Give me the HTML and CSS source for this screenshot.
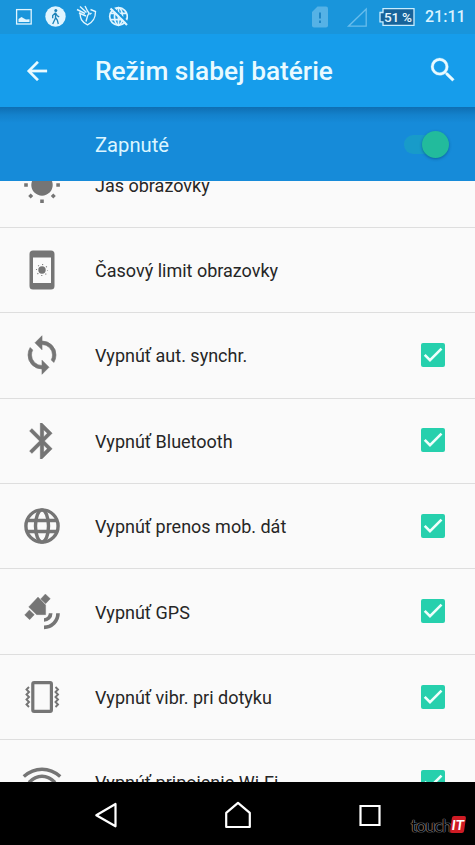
FILE: index.html
```html
<!DOCTYPE html>
<html lang="sk">
<head>
<meta charset="utf-8">
<title>Režim slabej batérie</title>
<link rel="stylesheet" href="styles.css">
</head>
<body>
<div class="phone">
  <div class="status">
    <svg class="notifications" width="120" height="34" viewBox="0 0 120 34">
      <g fill="none" stroke="#e0f5ff">
        <rect x="8.600" y="9.600" width="14.600" height="14.400" stroke-width="1.300"/>
        <path d="M10.500 22v-3l3-2 2.500 1.500 2 1 3.500-.3V22z" fill="#e0f5ff" stroke="none"/>
        <circle cx="47.500" cy="16.500" r="10.200" fill="#e0f5ff" stroke="none"/>
        <circle cx="47.800" cy="10.600" r="1.500" fill="#1c83b8" stroke="none"/>
        <path d="M47.500 12.500v5.500l-2.800 6M47.500 17.500l1.800 2.500 1 4M47.300 13l-2.600 2.500v2.700M48 13.500l1.200 2.300 2 1" stroke="#1c83b8" stroke-width="1.300"/>
        <path d="M72 12.500c.2 6 1.500 9.500 7.500 12.300 6.500-3.300 8-7.300 8-13.300l-5-2" stroke-width="1.400"/>
        <path d="M69 9.500l8 4M72 6.500l6.500 6M77 6l2.500 5M71 13l7 3M79.500 11l1.500 2-1.500 3-1.500 5.500M81.500 14.500l2-1.500" stroke-width="1.400"/>
        <circle cx="110.500" cy="16.500" r="8.800" stroke-width="1.700"/>
        <ellipse cx="110.500" cy="16.500" rx="4" ry="8.800" stroke-width="1.700"/>
        <path d="M102 13.300h17M102 19.700h17M110.500 8v17" stroke-width="1.700"/>
        <path d="M104.200 7.200l16 16" stroke="#1995db" stroke-width="2"/>
        <path d="M102.500 8.500L119 25" stroke-width="2.200"/>
      </g>
    </svg>
    <svg class="signals" width="60" height="34" viewBox="308 0 60 34">
      <path d="M317.500 6.500h8.500a2 2 0 0 1 2 2v17a2 2 0 0 1-2 2h-12a2 2 0 0 1-2-2V12z" fill="#55b2e6"/>
      <path d="M320 12.500v6M320 20.500v2.500" stroke="#1f86c6" stroke-width="2"/>
      <path d="M366.200 9v17.200H348.500z" fill="none" stroke="#69bdec" stroke-width="1.300"/>
    </svg>
    <div class="battery"><svg width="36" height="18" viewBox="0 0 36 18"><path d="M4 .7h31v16.600H4v-3.500H1V4.500h3z" fill="#17639a" stroke="#c8edff" stroke-width="1.300"/></svg><span>51 %</span></div>
    <span class="clock">21:11</span>
  </div>
  <header class="bar">
    <svg class="back" width="30" height="30" viewBox="0 0 24 24"><path fill="#e9faff" stroke="#e9faff" stroke-width=".2" d="M20 11H7.830l5.590-5.590L12 4l-8 8 8 8 1.410-1.410L7.830 13H20z"/></svg>
    <h1>Režim slabej batérie</h1>
    <svg class="search" width="32" height="32" viewBox="0 0 24 24"><path fill="#e9faff" stroke="#e9faff" stroke-width=".2" d="M15.500 14h-.79l-.28-.27A6.470 6.470 0 0 0 16 9.500 6.500 6.500 0 1 0 9.500 16c1.610 0 3.090-.59 4.230-1.570l.27.28v.79l5 4.990L20.490 19zm-6 0a4.500 4.500 0 1 1 0-9 4.500 4.500 0 0 1 0 9z"/></svg>
  </header>
  <div class="master">
    <div class="cast"></div>
    <span>Zapnuté</span>
    <div class="switch"><i></i></div>
  </div>
  <main class="viewport">
    <div class="list">
      <div class="row">
        <svg class="icon" viewBox="0 0 36 36"><g fill="#757575"><circle cx="18" cy="18" r="10.700"/><path d="M16.200 0h3.600v3.600h-3.600zM16.200 32.400h3.600v3.600h-3.600zM.2 16.200h3.600v3.600H.2zM32.300 16.200h3.600v3.600h-3.600z"/><path d="M6.700 26.400l2.500 2.500-2.500 2.500-2.500-2.500zM29.300 26.400l2.500 2.500-2.500 2.500-2.500-2.500zM6.700 4.600l2.500 2.500-2.500 2.500-2.500-2.500zM29.300 4.600l2.500 2.500-2.500 2.500-2.500-2.500z"/></g></svg>
        <span>Jas obrazovky</span>
      </div>
      <div class="row">
        <svg class="icon tall" viewBox="0 0 36 40"><path fill="#757575" fill-rule="evenodd" d="M9 .5h18a3.500 3.500 0 0 1 3.500 3.500v32a3.500 3.500 0 0 1-3.500 3.500H9A3.500 3.500 0 0 1 5.500 36V4A3.500 3.500 0 0 1 9 .5zM9 7.500V33h18V7.500z"/><circle cx="18" cy="20" r="3.700" fill="#757575"/><circle cx="18" cy="20" r="5.500" fill="none" stroke="#757575" stroke-width="1.100" stroke-dasharray="1.100 3.220" stroke-dashoffset=".55"/></svg>
        <span>Časový limit obrazovky</span>
      </div>
      <div class="row">
        <svg class="icon sync" viewBox="0 0 24 24"><path fill="#757575" stroke="#757575" stroke-width=".35" d="M12 4V1L8 5l4 4V6a6 6 0 0 1 6 6c0 1.010-.25 1.970-.7 2.800l1.460 1.460A7.930 7.930 0 0 0 20 12a8 8 0 0 0-8-8zm0 14a6 6 0 0 1-6-6c0-1.010.25-1.970.7-2.800L5.240 7.740A7.930 7.930 0 0 0 4 12a8 8 0 0 0 8 8v3l4-4-4-4z"/></svg>
        <span>Vypnúť aut. synchr.</span>
        <svg class="check" viewBox="0 0 24 24"><rect width="24" height="24" rx="2" fill="#26d0ad"/><path d="M3.700 11.800l5.300 5.300L20.500 5.700" fill="none" stroke="#effffc" stroke-width="2.600"/></svg>
      </div>
      <div class="row">
        <svg class="icon" viewBox="2 2 20 20"><path fill="#757575" stroke="#757575" stroke-width=".15" d="M17.710 7.710L12 2h-1v7.590L6.410 5 5 6.410 10.590 12 5 17.590 6.410 19 11 14.410V22h1l5.710-5.710-4.300-4.290zM13 5.830l1.880 1.880L13 9.590zm1.880 10.460L13 18.170v-3.760z"/></svg>
        <span>Vypnúť Bluetooth</span>
        <svg class="check" viewBox="0 0 24 24"><rect width="24" height="24" rx="2" fill="#26d0ad"/><path d="M3.700 11.800l5.300 5.300L20.500 5.700" fill="none" stroke="#effffc" stroke-width="2.600"/></svg>
      </div>
      <div class="row">
        <svg class="icon" viewBox="0 0 36 36"><g fill="none" stroke="#757575" stroke-width="3.400"><circle cx="18" cy="18" r="16.100"/><ellipse cx="18" cy="18" rx="6.500" ry="16.100"/><path d="M3.500 12.500h29M3.500 23.500h29"/></g></svg>
        <span>Vypnúť prenos mob. dát</span>
        <svg class="check" viewBox="0 0 24 24"><rect width="24" height="24" rx="2" fill="#26d0ad"/><path d="M3.700 11.800l5.300 5.300L20.500 5.700" fill="none" stroke="#effffc" stroke-width="2.600"/></svg>
      </div>
      <div class="row">
        <svg class="icon" viewBox="0 0 108 108"><g fill="#757575"><path d="M64 0l15 14-14 15-15-14zM16 48l15 14-14 15L2 63zM42 9l23 24v29H38L14 39z" stroke="#757575" stroke-width="1"/></g><g fill="none" stroke="#757575" stroke-width="11"><path d="M80 58A20 20 0 0 1 60 78M102 58A42 42 0 0 1 60 100"/></g></svg>
        <span>Vypnúť GPS</span>
        <svg class="check" viewBox="0 0 24 24"><rect width="24" height="24" rx="2" fill="#26d0ad"/><path d="M3.700 11.800l5.300 5.300L20.500 5.700" fill="none" stroke="#effffc" stroke-width="2.600"/></svg>
      </div>
      <div class="row">
        <svg class="icon" viewBox="0 0 36 36"><g fill="none" stroke="#757575"><rect x="8.800" y="3.600" width="18.600" height="28.800" rx="1.300" stroke-width="3.200"/><path d="M5 8L2.500 10.500 5 13l-2.500 2.500L5 18l-2.500 2.500L5 23l-2.500 2.500L5 28M31.500 8l2.500 2.500-2.500 2.500 2.500 2.500-2.500 2.500 2.500 2.500-2.500 2.500 2.500 2.500-2.500 2.500" stroke-width="1.900"/></g></svg>
        <span>Vypnúť vibr. pri dotyku</span>
        <svg class="check" viewBox="0 0 24 24"><rect width="24" height="24" rx="2" fill="#26d0ad"/><path d="M3.700 11.800l5.300 5.300L20.500 5.700" fill="none" stroke="#effffc" stroke-width="2.600"/></svg>
      </div>
      <div class="row">
        <svg class="icon wide" viewBox="0 0 40 36"><g fill="none" stroke="#757575" stroke-width="3.500"><path d="M1.800 12.500Q10 5.200 20 5.200t18.200 7.300M7 18.500q6-6.200 13-6.200t13 6.200M13 24q7-7 14 0"/></g></svg>
        <span>Vypnúť pripojenie Wi-Fi</span>
        <svg class="check" viewBox="0 0 24 24"><rect width="24" height="24" rx="2" fill="#26d0ad"/><path d="M3.700 11.800l5.300 5.300L20.500 5.700" fill="none" stroke="#effffc" stroke-width="2.600"/></svg>
      </div>
    </div>
  </main>
  <nav class="nav">
    <svg width="24" height="28" viewBox="0 0 24 28"><path d="M21.500 3v22.300L2.300 14.300z" fill="none" stroke="#fff" stroke-width="2.200" stroke-linejoin="round"/></svg>
    <svg width="28" height="28" viewBox="0 0 28 28"><path d="M14 1.800l11.800 10V26H2.200V11.800z" fill="none" stroke="#fff" stroke-width="2.200" stroke-linejoin="round"/></svg>
    <svg width="24" height="28" viewBox="0 0 24 28"><path d="M2.500 5h19v19h-19z" fill="none" stroke="#fff" stroke-width="2.200"/></svg>
    <div class="brand"><span>touch</span><b>IT</b></div>
  </nav>
</div>
</body>
</html>
```
FILE: styles.css
```css
* { box-sizing: border-box; }

body {
  margin: 0;
  overflow: hidden;
  font-family: Roboto, "Noto Sans", sans-serif;
}

.phone {
  display: flex;
  flex-direction: column;
  width: 475px;
  height: 845px;
  background: #fafafa;
}

.status {
  display: flex;
  align-items: center;
  height: 34px;
  padding: 0 11px 0 8px;
  background: #1995db;
}

.notifications {
  flex: none;
  margin-left: -.500px;
}

.signals { flex: none; margin-left: auto; }

.battery {
  display: grid;
  width: 36px;
  margin-left: 11px;
}

.battery svg, .battery span { grid-area: 1 / 1; }

.battery span {
  padding-left: 5px;
  font-size: 13.500px;
  font-weight: 500;
  line-height: 18px;
  white-space: nowrap;
  letter-spacing: -.200px;
  color: #e9f8ff;
}

.clock {
  width: 39px;
  margin-left: 10px;
  font-size: 16px;
  font-weight: 500;
  line-height: 20px;
  white-space: nowrap;
  color: #d9f3ff;
}

.bar {
  display: flex;
  align-items: center;
  height: 73px;
  padding: 0 16px 0 22px;
  background: #169deb;
}

.bar h1 {
  flex: 1;
  margin: 0 0 0 43px;
  font-size: 26.250px;
  font-weight: 500;
  line-height: 34px;
  color: #e9faff;
}

.search { margin-top: -2px; }

.master {
  position: relative;
  display: flex;
  align-items: center;
  height: 74px;
  padding: 2px 26px 0 95px;
  background: #168bd9;
  font-size: 20.200px;
  color: #dcf5ff;
}

.cast {
  position: absolute;
  inset: 0 0 auto;
  height: 16px;
  background: linear-gradient(rgba(0, 60, 110, .36), rgba(0, 60, 110, .12) 50%, transparent);
}

.switch {
  display: flex;
  align-items: center;
  justify-content: flex-end;
  width: 45px;
  height: 19px;
  margin: -2px 0 0 auto;
  border-radius: 10px;
  background: linear-gradient(90deg, #189bc9 0 32px, transparent 32px);
}

.switch i {
  width: 27px;
  height: 27px;
  border-radius: 50%;
  background: #22bb9c;
  box-shadow: 0 1px 3px rgba(0, 50, 90, .45);
}

.viewport {
  height: 601px;
  overflow: hidden;
}

.list { margin-top: -38.500px; }

.row {
  display: flex;
  align-items: center;
  height: 85.400px;
  padding: 0 30px 0 24px;
  border-bottom: 1px solid #dedede;
  font-size: 18px;
  line-height: 24px;
  color: #262626;
}

.row span { flex: 1; padding-top: 2px; }

.icon {
  flex: none;
  width: 36px;
  height: 36px;
  margin-right: 35px;
}

.icon.tall { height: 40px; }
.icon.sync { width: 42px; height: 42px; margin: 0 32px 0 -3px; }
.icon.wide { width: 40px; margin: 0 33px 0 -2px; }

.check {
  flex: none;
  width: 24px;
  height: 24px;
  margin-top: -1px;
}

.nav {
  display: flex;
  align-items: center;
  height: 63px;
  padding: 3px 10px 1px 93.500px;
  background: #000;
}

.nav svg + svg { margin-left: 106px; }

.brand {
  display: flex;
  align-items: center;
  height: 20px;
  margin: 20px 0 0 auto;
  font-family: Lato, sans-serif;
}

.brand span {
  font-size: 18px;
  line-height: 20px;
  letter-spacing: -1px;
  color: #000;
  text-shadow: 0 0 1px #999, 0 0 1px #999, 0 0 1px #999;
}

.brand b {
  width: 14px;
  height: 17px;
  border-radius: 2px;
  background: #cf1b24;
  font-size: 14px;
  line-height: 17px;
  text-align: center;
  color: #fff;
  transform: skewX(-8deg);
}
```
